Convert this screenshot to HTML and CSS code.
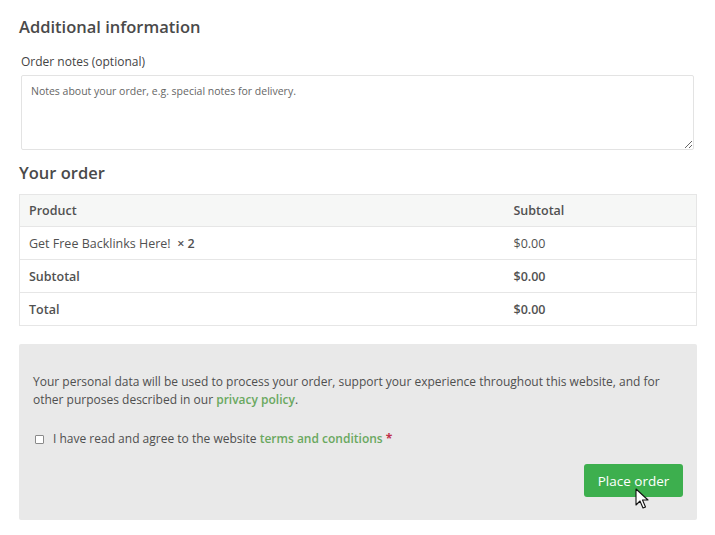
FILE: index.html
```html
<!DOCTYPE html>
<html lang="en">
<head>
<meta charset="utf-8">
<title>Checkout</title>
<link rel="stylesheet" href="styles.css">
</head>
<body>
<div class="wrap">
  <h3 class="heading">Additional information</h3>
  <label class="field-label" for="notes">Order notes (optional)</label>
  <textarea id="notes" class="notes" placeholder="Notes about your order, e.g. special notes for delivery."></textarea>

  <h3 class="heading heading-order">Your order</h3>
  <table class="order">
    <thead>
      <tr><th class="c1">Product</th><th class="c2">Subtotal</th></tr>
    </thead>
    <tbody>
      <tr><td class="c1">Get Free Backlinks Here!&nbsp; <strong>× 2</strong></td><td class="c2">$0.00</td></tr>
    </tbody>
    <tfoot>
      <tr><th class="c1">Subtotal</th><td class="c2"><strong>$0.00</strong></td></tr>
      <tr><th class="c1">Total</th><td class="c2"><strong>$0.00</strong></td></tr>
    </tfoot>
  </table>

  <div class="payment">
    <p class="privacy">Your personal data will be used to process your order, support your experience throughout this website, and for other purposes described in our <a href="#" class="link">privacy policy</a>.</p>
    <label class="terms"><input type="checkbox" class="check"><span>I have read and agree to the website <a href="#" class="link">terms and conditions</a> <span class="req">*</span></span></label>
    <div class="actions">
      <button class="place" type="button">Place order</button>
      <svg class="cursor" width="14" height="22" viewBox="0 0 14 22"><path d="M1 1 L1 17 L5 13 L8 20 L10.5 19 L7.5 12 L13 12 Z" fill="#fff" stroke="#111" stroke-width="1.1" stroke-linejoin="round"/></svg>
    </div>
  </div>
</div>
</body>
</html>
```
FILE: styles.css
```css
* { box-sizing: border-box; }
body {
  margin: 0;
  background: #fff;
  font-family: "Open Sans", "Noto Sans", sans-serif;
  color: #515151;
}
.wrap {
  width: 678px;
  margin-left: 19px;
  padding-top: 16px;
}
.heading {
  margin: 0;
  font-size: 16.5px;
  line-height: 22px;
  font-weight: 600;
  color: #4a4a4a;
}
.field-label {
  display: block;
  margin: 15px 0 4px 2px;
  font-size: 12px;
  line-height: 18px;
  color: #444;
}
.notes {
  display: block;
  width: 673px;
  height: 75px;
  margin-left: 2px;
  padding: 7px 9px;
  border: 1px solid #e3e3e3;
  border-radius: 2px;
  font-family: "Open Sans", "Noto Sans", sans-serif;
  font-size: 10.5px;
  line-height: 16px;
  color: #555;
  background: #fff;
  resize: vertical;
}
.notes::placeholder { color: #666; }
.heading-order {
  margin-top: 12px;
}
.order {
  margin-top: 10px;
  width: 678px;
  border-collapse: collapse;
  border: 1px solid #e6e6e6;
  font-size: 12.5px;
}
.order th, .order td {
  height: 33px;
  padding: 0 9px;
  text-align: left;
  border-top: 1px solid #e6e6e6;
  font-weight: 400;
}
.order th { font-weight: 600; }
.order strong { font-weight: 600; }
.order thead th { background: #f6f7f6; border-top: 0; height: 32px; }
.order .c1 { width: 485px; }
.payment {
  margin-top: 18px;
  background: #e9e9e9;
  border-radius: 2px;
  padding: 29px 14px 23px 14px;
}
.privacy {
  margin: 0;
  font-size: 12px;
  line-height: 18px;
  color: #4f4f4f;
}
.link {
  color: #6aa85f;
  font-weight: 600;
  text-decoration: none;
}
.terms {
  display: flex;
  align-items: center;
  gap: 9px;
  margin-top: 21px;
  font-size: 12px;
  line-height: 18px;
  color: #4f4f4f;
}
.check {
  width: 9px;
  height: 9px;
  margin: 0 0 0 2px;
  appearance: none;
  border: 1px solid #8a8a8a;
  background: #fff;
  border-radius: 1px;
}
.req { color: #c0304a; font-weight: 700; }
.actions {
  position: relative;
  display: flex;
  justify-content: flex-end;
  margin-top: 16px;
}
.place {
  width: 99px;
  height: 33px;
  border: 0;
  border-radius: 3px;
  background: #3daf4e;
  color: #fff;
  font-family: "Open Sans", "Noto Sans", sans-serif;
  font-size: 13.5px;
  padding: 0;
}
.cursor {
  position: absolute;
  left: 602px;
  top: 24px;
}
```
